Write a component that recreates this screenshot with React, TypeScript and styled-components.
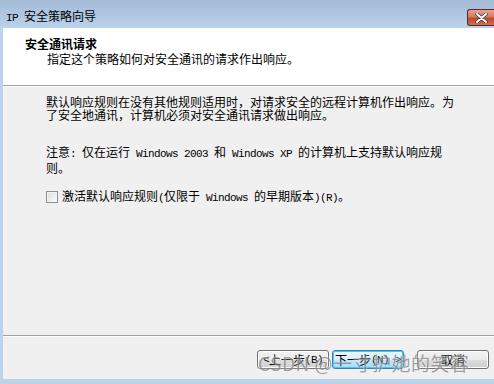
import { createGlobalStyle } from "styled-components";
import styled from "styled-components";

const GlobalStyle = createGlobalStyle`
  html, body {
    margin: 0;
    padding: 0;
    overflow: hidden;
    background: #bcd3ec;
  }
  * {
    box-sizing: border-box;
  }
`

const Window = styled.div`
  position: relative;
  width: 494px;
  height: 384px;
  display: flex;
  flex-direction: column;
  background: linear-gradient(#a3bbd7 0px, #b4cbe5 20px, #bcd3ec 28px);
  padding: 0 0 5px 3px;
  font-family: "Noto Sans CJK SC", "Noto Sans", sans-serif;
  font-size: 12px;
  color: #000;
`

const TitleBar = styled.div`
  height: 28px;
  display: flex;
  align-items: flex-start;
  justify-content: space-between;
  padding: 8px 0 0 3px;
`

const TitleText = styled.div`
  line-height: 15px;
  font-size: 12px;
  color: #000;
`

// SimSun-like half-width Latin: 6px per character
const Mono = styled.span`
  font-family: "Liberation Mono", "DejaVu Sans Mono", monospace;
  font-size: 11px;
  letter-spacing: -0.6px;
  white-space: pre;
`

const CloseButton = styled.div`
  width: 27px;
  height: 17px;
  margin-top: 1px;
  border: 1px solid #5a2a24;
  border-right: none;
  border-radius: 3px 0 0 3px;
  background: linear-gradient(#e8a593 0%, #d47a62 45%, #c0472a 55%, #d2704f 100%);
  display: flex;
  align-items: center;
  justify-content: center;
`

const Content = styled.div`
  flex: 1;
  display: flex;
  flex-direction: column;
  background: #f0f0f0;
`

const Header = styled.div`
  height: 58px;
  background: #fff;
  padding: 9px 0 0 22px;
  border-bottom: 1px solid #a0a0a0;
`

const HeaderTitle = styled.div`
  font-weight: bold;
  line-height: 14px;
`

const HeaderSub = styled.div`
  line-height: 14px;
  margin: 1px 0 0 22px;
`

const HeaderEdge = styled.div`
  height: 1px;
  background: #fff;
`

const Body = styled.div`
  flex: 1;
  padding: 8px 0 0 43px;
  display: flex;
  flex-direction: column;
`

const Para = styled.div<{ $gap: number }>`
  line-height: 13px;
  white-space: nowrap;
  margin-bottom: ${p => p.$gap}px;
`

const CheckRow = styled.label`
  display: flex;
  align-items: center;
  gap: 4px;
  line-height: 14px;
  white-space: nowrap;
`

const Box = styled.span`
  width: 12px;
  height: 12px;
  border: 1px solid #8e8f8f;
  background: linear-gradient(135deg, #dcdcdc, #fbfbfb);
  box-shadow: inset 0 0 0 1px #f4f4f4;
`

const Separator = styled.div`
  height: 2px;
  border-top: 1px solid #a0a0a0;
  border-bottom: 1px solid #fff;
`

const Footer = styled.div`
  height: 42px;
  display: flex;
  align-items: flex-start;
  justify-content: flex-end;
  padding: 13px 5px 0 0;
`

const Button = styled.div<{ $focus?: boolean; $space?: number }>`
  width: 72px;
  height: 19px;
  margin-left: ${p => p.$space ?? 0}px;
  border: 1px solid ${p => (p.$focus ? "#3c7fb1" : "#707070")};
  border-radius: 3px;
  background: ${p =>
    p.$focus
      ? "linear-gradient(#eaf6fd 0%, #d9f0fc 50%, #bee6fd 51%, #a7d9f5 100%)"
      : "linear-gradient(#f2f2f2 0%, #ebebeb 50%, #dddddd 51%, #cfcfcf 100%)"};
  box-shadow: inset 0 0 0 1px ${p => (p.$focus ? "#48c7f5" : "#fcfcfc")};
  display: flex;
  align-items: center;
  justify-content: center;
  line-height: 14px;
  white-space: nowrap;
`

const Watermark = styled.div`
  position: absolute;
  left: 258px;
  top: 349px;
  font-family: "Noto Sans CJK SC", sans-serif;
  font-size: 19px;
  letter-spacing: 0.5px;
  color: rgba(80, 80, 80, 0.55);
  text-shadow: 0 0 2px rgba(255, 255, 255, 0.8);
  white-space: nowrap;
  pointer-events: none;
`

export default function App() {
  return (
    <>
      <GlobalStyle />
      <Window>
        <TitleBar>
          <TitleText><Mono>IP </Mono>安全策略向导</TitleText>
          <CloseButton>
            <svg width="13" height="10" viewBox="0 0 13 10">
              <path d="M2 1 L11 9 M11 1 L2 9" stroke="#3a3a3a" strokeWidth="3.4" strokeLinecap="round" />
              <path d="M2 1 L11 9 M11 1 L2 9" stroke="#fff" strokeWidth="2" strokeLinecap="round" />
            </svg>
          </CloseButton>
        </TitleBar>
        <Content>
          <Header>
            <HeaderTitle>安全通讯请求</HeaderTitle>
            <HeaderSub>指定这个策略如何对安全通讯的请求作出响应。</HeaderSub>
          </Header>
          <HeaderEdge />
          <Body>
            <Para $gap={24}>
              默认响应规则在没有其他规则适用时，对请求安全的远程计算机作出响应。为<br />
              了安全地通讯，计算机必须对安全通讯请求做出响应。
            </Para>
            <Para $gap={15}>
              注意<Mono>: </Mono>仅在运行<Mono> Windows 2003 </Mono>和<Mono> Windows XP </Mono>的计算机上支持默认响应规<br />
              则。
            </Para>
            <CheckRow>
              <Box />
              <span>激活默认响应规则<Mono>(</Mono>仅限于<Mono> Windows </Mono>的早期版本<Mono>)(R)</Mono>。</span>
            </CheckRow>
          </Body>
          <Separator />
          <Footer>
            <Button><Mono>&lt;</Mono>上一步<Mono>(B)</Mono></Button>
            <Button $focus $space={3}>下一步<Mono>(N) &gt;</Mono></Button>
            <Button $space={13}>取消</Button>
          </Footer>
        </Content>
        <Watermark>CSDN @一寸护她的笑容</Watermark>
      </Window>
    </>
  );
}
